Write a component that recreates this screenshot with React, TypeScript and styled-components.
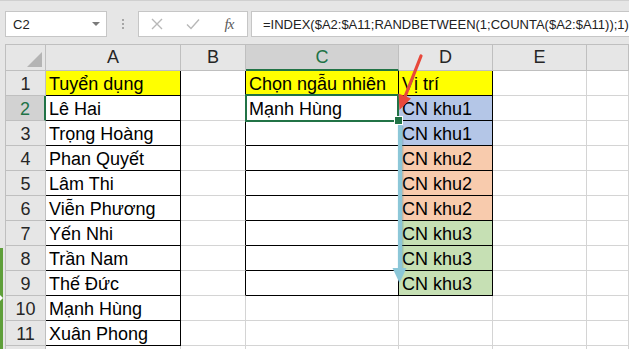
import React from "react";
import styled, { createGlobalStyle, css } from "styled-components";

const GlobalStyle = createGlobalStyle`
  html, body { margin: 0; padding: 0; background: #fff; }
  body { overflow: hidden; }
  * { box-sizing: border-box; }
`;

const GREEN = "#217346";
const GRID = "#d4d4d4";
const HEAD_LINE = "#bfbfbf";
const BLACK = "#000";
const HEAD_BG = "#e6e6e6";
const HEAD_SEL = "#d2d2d2";

const Frame = styled.div`
  position: relative;
  width: 629px;
  height: 349px;
  overflow: hidden;
  background: ${HEAD_BG};
  font-family: "Liberation Sans", Arial, sans-serif;
`;

const FormulaBar = styled.div`
  height: 44px;
  display: flex;
  align-items: flex-start;
  padding: 10px 0 0 5px;
  border-top: 1px solid #d0d0d0;
`;

const NameBox = styled.div`
  width: 102px;
  height: 26px;
  background: #fff;
  border: 1px solid #c6c6c6;
  display: flex;
  align-items: center;
  justify-content: space-between;
  padding: 0 6px 0 7px;
  font-size: 13px;
  color: #222;
`;

const DropArrow = styled.span`
  width: 0;
  height: 0;
  border-left: 4px solid transparent;
  border-right: 4px solid transparent;
  border-top: 4px solid #7a7a7a;
`;

const Dots = styled.div`
  width: 31px;
  height: 26px;
  display: flex;
  flex-direction: column;
  align-items: center;
  justify-content: center;
  gap: 2px;
  span {
    width: 2px;
    height: 2px;
    background: #a6a6a6;
  }
`;

const FxBox = styled.div`
  width: 110px;
  height: 26px;
  background: #fff;
  border: 1px solid #c6c6c6;
  display: flex;
  align-items: center;
  padding-left: 11px;
  gap: 22px;
`;

const IconSlot = styled.span`
  width: 14px;
  height: 14px;
  display: flex;
  align-items: center;
  justify-content: center;
`;

const Fx = styled.span`
  font-family: "Liberation Serif", "Times New Roman", serif;
  font-style: italic;
  font-size: 15px;
  color: #5a5a5a;
  letter-spacing: -1px;
`;

const FormulaInput = styled.div`
  flex: 1;
  height: 26px;
  margin-left: 3px;
  margin-right: -10px;
  background: #fff;
  border: 1px solid #c6c6c6;
  display: flex;
  align-items: center;
  padding-left: 11px;
  font-size: 13px;
  color: #222;
  white-space: nowrap;
`;

const SheetArea = styled.div`
  display: flex;
`;

const Gutter = styled.div`
  width: 5px;
  flex: none;
`;

const Grid = styled.div`
  flex: 1;
  display: grid;
  grid-template-columns: 40px 135px 65px 153px 94px 94px 1fr;
  grid-template-rows: 27px repeat(12, 25px);
  border-left: 1px solid ${HEAD_LINE};
  background: #fff;
`;

const Corner = styled.div`
  position: relative;
  background: ${HEAD_BG};
  border-right: 1px solid ${HEAD_LINE};
  border-bottom: 1px solid ${HEAD_LINE};
  border-top: 1px solid ${HEAD_LINE};
  display: flex;
  align-items: flex-end;
  justify-content: flex-end;
  padding: 0 3px 3px 0;
`;

const CornerTriangle = styled.span`
  width: 15px;
  height: 15px;
  background: #b4b4b4;
  clip-path: polygon(100% 0, 100% 100%, 0 100%);
`;

const ColHead = styled.div<{ $sel?: boolean }>`
  background: ${(p) => (p.$sel ? HEAD_SEL : HEAD_BG)};
  border-top: 1px solid ${HEAD_LINE};
  border-right: 1px solid ${HEAD_LINE};
  border-bottom: ${(p) => (p.$sel ? `2px solid ${GREEN}` : `1px solid ${HEAD_LINE}`)};
  display: flex;
  align-items: flex-end;
  justify-content: center;
  font-size: 18px;
  line-height: 21px;
  padding-bottom: ${(p) => (p.$sel ? "1px" : "2px")};
  color: ${(p) => (p.$sel ? GREEN : "#262626")};
`;

const RowHead = styled.div<{ $sel?: boolean }>`
  background: ${(p) => (p.$sel ? HEAD_SEL : HEAD_BG)};
  border-right: ${(p) => (p.$sel ? `2px solid ${GREEN}` : `1px solid ${HEAD_LINE}`)};
  border-bottom: 1px solid ${HEAD_LINE};
  display: flex;
  align-items: flex-end;
  justify-content: center;
  font-size: 18px;
  line-height: 21px;
  color: ${(p) => (p.$sel ? GREEN : "#262626")};
`;

const Cell = styled.div<{ $fill?: string; $r?: string; $b?: string; $sel?: boolean }>`
  position: relative;
  background: ${(p) => p.$fill || "#fff"};
  border-right: 1px solid ${(p) => p.$r || GRID};
  border-bottom: 1px solid ${(p) => p.$b || GRID};
  display: flex;
  align-items: flex-end;
  padding-left: 3px;
  font-size: 18px;
  line-height: 21px;
  color: #000;
  white-space: nowrap;
  ${(p) =>
    p.$sel &&
    css`
      z-index: 2;
      &::after {
        content: "";
        position: absolute;
        left: -1px;
        top: -2px;
        right: -1px;
        bottom: -2px;
        border: 2px solid ${GREEN};
        pointer-events: none;
      }
      &::before {
        content: "";
        position: absolute;
        right: -5px;
        bottom: -5px;
        width: 7px;
        height: 7px;
        background: ${GREEN};
        border: 1px solid #fff;
        z-index: 3;
      }
    `}
`;

const Overlay = styled.svg`
  position: absolute;
  left: 0;
  top: 0;
  pointer-events: none;
  z-index: 5;
`;

const SideTab = styled.div`
  position: absolute;
  left: 0;
  top: 248px;
  width: 3px;
  height: 101px;
  background: #5f9f3a;
  z-index: 6;
  display: flex;
  align-items: flex-start;
  padding-top: 47px;
  span {
    width: 0;
    height: 0;
    border-left: 3px solid #fff;
    border-top: 3px solid transparent;
    border-bottom: 3px solid transparent;
  }
`;

const colA = [
  "Tuyển dụng",
  "Lê Hai",
  "Trọng Hoàng",
  "Phan Quyết",
  "Lâm Thi",
  "Viễn Phương",
  "Yến Nhi",
  "Trần Nam",
  "Thế Đức",
  "Mạnh Hùng",
  "Xuân Phong",
];
const colC = ["Chọn ngẫu nhiên", "Mạnh Hùng"];
const colD = [
  "Vị trí",
  "CN khu1",
  "CN khu1",
  "CN khu2",
  "CN khu2",
  "CN khu2",
  "CN khu3",
  "CN khu3",
  "CN khu3",
];
const YELLOW = "#ffff00";
const dFill = (r: number) =>
  r === 1 ? YELLOW : r <= 3 ? "#b4c6e7" : r <= 6 ? "#f8cbad" : r <= 9 ? "#c6e0b4" : undefined;

const headers = ["A", "B", "C", "D", "E", ""];

export default function App() {
  const rows = Array.from({ length: 12 }, (_, i) => i + 1);
  return (
    <Frame>
      <GlobalStyle />
      <FormulaBar>
        <NameBox>
          <span>C2</span>
          <DropArrow />
        </NameBox>
        <Dots>
          <span />
          <span />
          <span />
        </Dots>
        <FxBox>
          <IconSlot>
            <svg width="12" height="12" viewBox="0 0 12 12">
              <path d="M1 1 L11 11 M11 1 L1 11" stroke="#b8b8b8" strokeWidth="1.4" />
            </svg>
          </IconSlot>
          <IconSlot>
            <svg width="14" height="12" viewBox="0 0 14 12">
              <path d="M1 6.5 L5 10.5 L13 1.5" stroke="#b8b8b8" strokeWidth="1.4" fill="none" />
            </svg>
          </IconSlot>
          <IconSlot>
            <Fx>fx</Fx>
          </IconSlot>
        </FxBox>
        <FormulaInput>=INDEX($A2:$A11;RANDBETWEEN(1;COUNTA($A2:$A11));1)</FormulaInput>
      </FormulaBar>
      <SheetArea>
        <Gutter />
        <Grid>
          <Corner>
            <CornerTriangle />
          </Corner>
          {headers.map((h, i) => (
            <ColHead key={i} $sel={h === "C"}>
              {h}
            </ColHead>
          ))}
          {rows.map((r) => {
            const boxed = r <= 9;
            return (
              <React.Fragment key={r}>
                <RowHead $sel={r === 2}>{r <= 11 ? r : ""}</RowHead>
                <Cell
                  $fill={r === 1 ? YELLOW : undefined}
                  $r={r <= 11 ? BLACK : undefined}
                  $b={r <= 11 ? BLACK : undefined}
                >
                  {colA[r - 1] || ""}
                </Cell>
                <Cell $r={boxed ? BLACK : undefined} />
                <Cell
                  $fill={r === 1 ? YELLOW : undefined}
                  $r={boxed ? BLACK : undefined}
                  $b={boxed ? BLACK : undefined}
                  $sel={r === 2}
                >
                  {colC[r - 1] || ""}
                </Cell>
                <Cell
                  $fill={dFill(r)}
                  $r={boxed ? BLACK : undefined}
                  $b={boxed ? BLACK : undefined}
                >
                  {colD[r - 1] || ""}
                </Cell>
                <Cell />
                <Cell />
              </React.Fragment>
            );
          })}
        </Grid>
      </SheetArea>
      <Overlay width="629" height="349" viewBox="0 0 629 349">
        <line x1="421" y1="56" x2="404.5" y2="98" stroke="#e8483b" strokeWidth="3.2" strokeLinecap="round" />
        <polygon points="399.5,110 398.5,93.5 411,98.5" fill="#e8483b" />
        <line x1="401.5" y1="126" x2="401.5" y2="270" stroke="#5f8f9c" strokeOpacity="0.35" strokeWidth="4" />
        <line x1="400" y1="125" x2="400" y2="270" stroke="#8cc7d8" strokeWidth="4.2" />
        <polygon points="392.5,268 406.5,268 399.5,283" fill="#8cc7d8" />
      </Overlay>
      <SideTab>
        <span />
      </SideTab>
    </Frame>
  );
}
